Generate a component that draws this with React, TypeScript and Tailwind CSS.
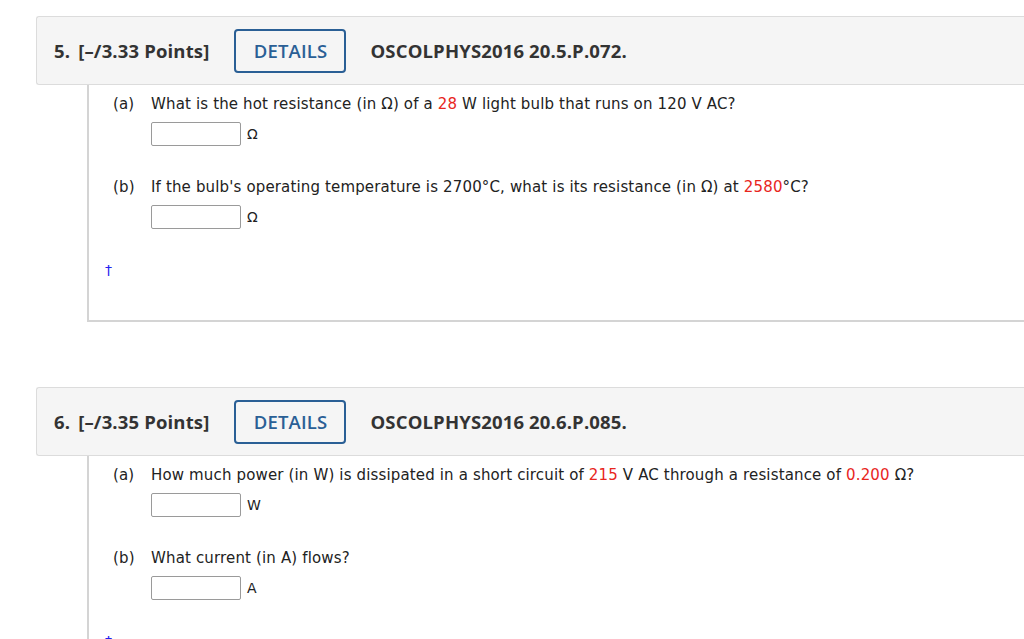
import React from "react";

const red = "text-[#e8261d]";

function Header({ num, points, code }: { num: number; points: string; code: string }) {
  return (
    <div
      className="flex h-[69px] items-center rounded-l-[3px] border border-r-0 border-[#dcdcdc] bg-[#f5f5f5] pl-[17px] text-[#333] font-bold text-[18.5px]"
      style={{ fontFamily: '"Open Sans", sans-serif' }}
    >
      <span>{num}.</span>
      <span className="ml-[8px]">[–/{points} Points]</span>
      <button className="ml-[25px] flex h-[44px] w-[112px] items-center justify-center rounded-[4px] border-2 border-[#2a5f95] text-[18.5px] font-semibold text-[#2a5f95]">
        DETAILS
      </button>
      <span className="ml-[24px]">{code}</span>
    </div>
  );
}

function Answer({ unit }: { unit: string }) {
  return (
    <div className="mt-[8px] flex items-center pl-[62px]">
      <div className="h-[24px] w-[90px] rounded-[2px] border border-[#9a9a9a] bg-white" />
      <span className="ml-[6px] text-[14px] tracking-normal">{unit}</span>
    </div>
  );
}

function Part({ label, children }: { label: string; children: React.ReactNode }) {
  return (
    <div className="flex h-[20px] items-center whitespace-nowrap leading-[20px]">
      <span className="w-[38px] shrink-0 pl-[24px] box-content">{label}</span>
      <span>{children}</span>
    </div>
  );
}

export default function App() {
  return (
    <div
      className="h-[639px] w-[1024px] overflow-hidden bg-white pl-[36px] pt-[16px] text-[15px] tracking-[0.15px] text-[#222]"
      style={{ fontFamily: '"DejaVu Sans", Verdana, sans-serif' }}
    >
      {/* Question 5 */}
      <Header num={5} points="3.33" code="OSCOLPHYS2016 20.5.P.072." />
      <div className="ml-[51px] border-b-2 border-l-2 border-[#d4d4d4] pb-[40px] pt-[9px]">
        <Part label="(a)">
          What is the hot resistance (in Ω) of a <span className={red}>28</span> W light bulb that runs on 120 V AC?
        </Part>
        <Answer unit="Ω" />
        <div className="mt-[31px]">
          <Part label="(b)">
            If the bulb's operating temperature is 2700°C, what is its resistance (in Ω) at{" "}
            <span className={red}>2580</span>°C?
          </Part>
        </div>
        <Answer unit="Ω" />
        <div className="mt-[31px] h-[20px] pl-[16px] leading-[20px] text-[14px] text-[#2222ee]">†</div>
      </div>

      {/* Question 6 */}
      <div className="mt-[65px]">
        <Header num={6} points="3.35" code="OSCOLPHYS2016 20.6.P.085." />
        <div className="ml-[51px] border-l-2 border-[#d4d4d4] pb-[40px] pt-[9px]">
          <Part label="(a)">
            How much power (in W) is dissipated in a short circuit of <span className={red}>215</span> V AC through a
            resistance of <span className={red}>0.200</span> Ω?
          </Part>
          <Answer unit="W" />
          <div className="mt-[31px]">
            <Part label="(b)">What current (in A) flows?</Part>
          </div>
          <Answer unit="A" />
          <div className="mt-[31px] h-[20px] pl-[16px] leading-[20px] text-[14px] text-[#2222ee]">†</div>
        </div>
      </div>
    </div>
  );
}
